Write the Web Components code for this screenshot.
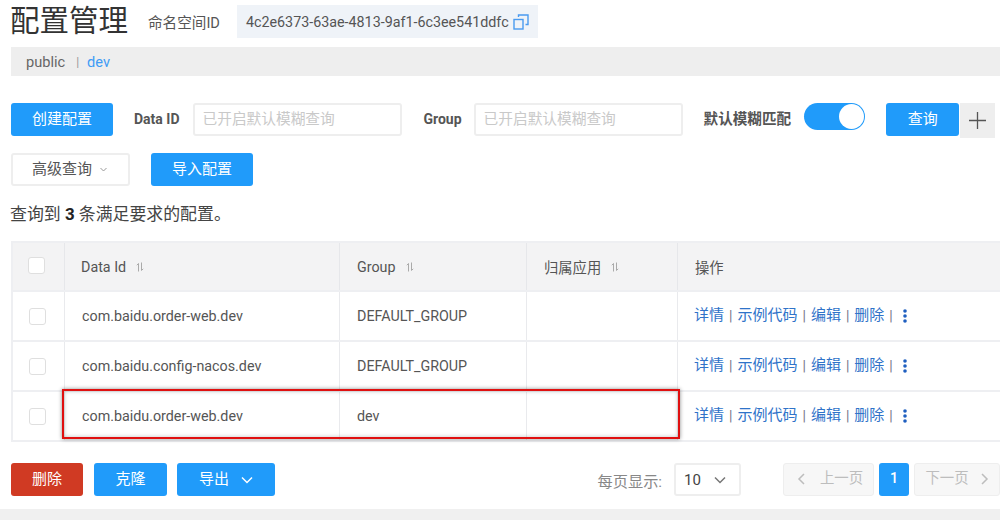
<!DOCTYPE html>
<html lang="zh">
<head>
<meta charset="utf-8">
<title>配置管理</title>
<style>
  html, body { margin: 0; height: 520px; overflow: hidden; background: #fff; }
  body { font-family: Roboto, "Noto Sans CJK SC", sans-serif; color: #333; }
</style>
</head>
<body>
<config-page></config-page>

<script>
const ICON_DOWN = '<svg width="12" height="8" viewBox="0 0 12 8"><path d="M1 1.5 6 6.5 11 1.5" fill="none" stroke="currentColor" stroke-width="1.5"/></svg>';

class UiButton extends HTMLElement {
  constructor() {
    super();
    this.attachShadow({ mode: 'open' });
  }

  connectedCallback() {
    this.shadowRoot.innerHTML = `
      <style>
        :host {
          display: inline-flex;
          align-items: center;
          justify-content: center;
          gap: 12px;
          box-sizing: border-box;
          height: 33px;
          width: var(--w, 102px);
          border-radius: 3px;
          background: #209bfa;
          color: #fff;
          font-size: 15px;
          line-height: 1;
        }
        :host([kind="danger"]) { background: #d03a23; }
        :host([kind="plain"]) {
          background: #fff;
          border: 2px solid #eeeeee;
          color: #555;
        }
      </style>
      <slot></slot>
    `;
  }
}

class UiInput extends HTMLElement {
  constructor() {
    super();
    this.attachShadow({ mode: 'open' });
  }

  connectedCallback() {
    this.shadowRoot.innerHTML = `
      <style>
        :host {
          display: flex;
          align-items: center;
          box-sizing: border-box;
          width: 209px;
          height: 33px;
          padding-left: 8px;
          border: 2px solid #eeeeee;
          border-radius: 3px;
          color: #c9c9c9;
          font-size: 14.7px;
          line-height: 1;
        }
      </style>
      <slot></slot>
    `;
  }
}

class UiSwitch extends HTMLElement {
  constructor() {
    super();
    this.attachShadow({ mode: 'open' });
  }

  connectedCallback() {
    this.shadowRoot.innerHTML = `
      <style>
        :host {
          display: flex;
          justify-content: flex-end;
          box-sizing: border-box;
          width: 61px;
          height: 27px;
          padding: 1px;
          border-radius: 14px;
          background: #209bfa;
        }
        .knob { width: 25px; height: 25px; border-radius: 50%; background: #fff; }
      </style>
      <div class="knob"></div>
    `;
  }
}

class NamespaceHeader extends HTMLElement {
  constructor() {
    super();
    this.attachShadow({ mode: 'open' });
  }

  connectedCallback() {
    this.shadowRoot.innerHTML = `
      <style>
        :host {
          display: flex;
          align-items: center;
          height: 33px;
          padding: 5px 0 0 10px;
        }
        h1 { margin: 0 20px 0 0; font-size: 29.5px; font-weight: 400; color: #333; line-height: 33px; }
        .label { font-size: 14.6px; color: #555; margin-right: 17px; }
        .id {
          display: flex;
          align-items: center;
          gap: 4px;
          box-sizing: border-box;
          width: 301px;
          height: 33px;
          padding-left: 9px;
          background: #eff3f8;
          color: #555;
          font-size: 14.3px;
        }
      </style>
      <h1>配置管理</h1>
      <span class="label">命名空间ID</span>
      <div class="id">
        <span>4c2e6373-63ae-4813-9af1-6c3ee541ddfc</span>
        <svg width="16" height="16" viewBox="0 0 16 16" fill="none" stroke="#4a9bf0" stroke-width="1.4">
          <rect x="1" y="5.5" width="9" height="9.5"/>
          <path d="M5.5 3V1H15V10.5H12.5"/>
        </svg>
      </div>
    `;
  }
}

class NamespaceTabs extends HTMLElement {
  constructor() {
    super();
    this.attachShadow({ mode: 'open' });
  }

  connectedCallback() {
    this.shadowRoot.innerHTML = `
      <style>
        :host {
          display: flex;
          align-items: center;
          height: 29px;
          margin: 9px 0 0 11px;
          padding-left: 15px;
          background: #eeeeee;
          font-size: 14.6px;
          color: #666;
        }
        .sep { margin: 0 8px 0 11px; color: #999; font-size: 12px; }
        .on { color: #3f9cf5; }
      </style>
      <span>public</span><span class="sep">|</span><span class="on">dev</span>
    `;
  }
}

class SearchBar extends HTMLElement {
  constructor() {
    super();
    this.attachShadow({ mode: 'open' });
  }

  connectedCallback() {
    this.shadowRoot.innerHTML = `
      <style>
        :host { display: block; padding: 27px 0 0 11px; }
        .row { display: flex; align-items: flex-start; }
        .second { margin-top: 15px; }
        .name { font-size: 14px; font-weight: 700; color: #555; line-height: 33px; white-space: nowrap; }
        .fuzzy { font-size: 14.6px; }
        .plus {
          display: flex;
          align-items: center;
          justify-content: center;
          width: 35px;
          height: 35px;
          margin-left: 1px;
          background: #eeeeee;
        }
        .caret { color: #999; display: flex; }
      </style>
      <div class="row">
        <ui-button>创建配置</ui-button>
        <span class="name" style="margin:0 13px 0 21px">Data ID</span>
        <ui-input>已开启默认模糊查询</ui-input>
        <span class="name" style="margin:0 12px 0 22px">Group</span>
        <ui-input>已开启默认模糊查询</ui-input>
        <span class="name fuzzy" style="margin:0 13px 0 21px">默认模糊匹配</span>
        <ui-switch></ui-switch>
        <ui-button style="--w:73px;margin-left:21px">查询</ui-button>
        <div class="plus">
          <svg width="17" height="17" viewBox="0 0 17 17"><path d="M0 8.5H17M8.5 0V17" stroke="#555" stroke-width="1.3"/></svg>
        </div>
      </div>
      <div class="row second">
        <ui-button kind="plain" style="--w:119px;gap:8px;padding-right:2px">高级查询<span class="caret"><svg width="7" height="5" viewBox="0 0 7 5"><path d="M.5 1 3.5 4 6.5 1" fill="none" stroke="currentColor"/></svg></span></ui-button>
        <ui-button style="margin-left:21px">导入配置</ui-button>
      </div>
    `;
  }
}

class SortHead extends HTMLElement {
  constructor() {
    super();
    this.attachShadow({ mode: 'open' });
  }

  connectedCallback() {
    this.shadowRoot.innerHTML = `
      <style>
        :host { display: inline-flex; align-items: center; gap: 10px; }
      </style>
      <slot></slot>
      <svg width="8" height="10" viewBox="0 0 8 10" fill="none" stroke="#aaa" stroke-width="1">
        <path d="M2.5 9.5V1.5L.8 3.2M5.5 .5V8.5L7.2 6.8"/>
      </svg>
    `;
  }
}

class ConfigRow extends HTMLElement {
  constructor() {
    super();
    this.attachShadow({ mode: 'open' });
  }

  connectedCallback() {
    const dataId = this.getAttribute('data-id');
    const group = this.getAttribute('data-group');

    this.shadowRoot.innerHTML = `
      <style>
        :host {
          display: grid;
          grid-template-columns: 52px 275px 187px 151px 1fr;
          height: 50px;
          box-sizing: border-box;
          border-left: 2px solid #eeeff2;
          border-bottom: 2px solid #eeeff2;
          font-size: 14.3px;
          color: #555;
        }
        .cell { display: flex; align-items: center; padding-left: 17px; border-right: 1px solid #e9eaed; }
        .cell:first-child { padding: 0 0 2px 15px; }
        .cell:nth-child(2) { padding-left: 16px; }
        .cell:last-child { border-right: 0; }
        .check { width: 15px; height: 15px; border: 1.5px solid #dfdfdf; border-radius: 3px; }
        .ops { color: #2f73c9; font-size: 15px; gap: 5px; padding: 0 0 1px 16px; line-height: 1; }
        .ops i { font-style: normal; color: #778; font-size: 14px; }
        .more { margin-left: 5px; display: flex; }
      </style>
      <div class="cell"><div class="check"></div></div>
      <div class="cell">${dataId}</div>
      <div class="cell">${group}</div>
      <div class="cell"></div>
      <div class="cell ops">
        <span>详情</span><i>|</i><span>示例代码</span><i>|</i><span>编辑</span><i>|</i><span>删除</span><i>|</i>
        <span class="more"><svg width="4" height="14" viewBox="0 0 4 14" fill="#1f5fc0"><circle cx="2" cy="2" r="1.8"/><circle cx="2" cy="7" r="1.8"/><circle cx="2" cy="12" r="1.8"/></svg></span>
      </div>
    `;
  }
}

class ConfigTable extends HTMLElement {
  constructor() {
    super();
    this.attachShadow({ mode: 'open' });
  }

  connectedCallback() {
    this.shadowRoot.innerHTML = `
      <style>
        :host {
          display: block;
          position: relative;
          margin-left: 11px;
          border-top: 2px solid #eeeff2;
        }
        .head {
          display: grid;
          grid-template-columns: 52px 275px 187px 151px 1fr;
          height: 49px;
          background: #f3f3f4;
          border-left: 2px solid #eeeff2;
          border-bottom: 2px solid #eeeff2;
          box-sizing: border-box;
          font-size: 14.3px;
          color: #555;
        }
        .head > div { display: flex; align-items: center; padding-left: 17px; border-right: 1px solid #e6e7ea; }
        .head > div:first-child { padding: 0 0 3px 15px; }
        .head > div:nth-child(2) { padding-left: 16px; }
        .head > div:last-child { border-right: 0; }
        .check { width: 15px; height: 15px; background: #fff; border: 1.5px solid #dfdfdf; border-radius: 3px; }
        .mark {
          position: absolute;
          left: 51px;
          top: 146px;
          width: 618px;
          height: 50px;
          box-sizing: border-box;
          border: 2px solid #e01010;
          box-shadow: 0 0 4px rgba(0, 0, 0, .45), inset 0 0 4px rgba(0, 0, 0, .25);
        }
      </style>
      <div class="head">
        <div><div class="check"></div></div>
        <div><sort-head>Data Id</sort-head></div>
        <div><sort-head>Group</sort-head></div>
        <div><sort-head>归属应用</sort-head></div>
        <div>操作</div>
      </div>
      <slot></slot>
      <div class="mark"></div>
    `;
  }
}

class PageFooter extends HTMLElement {
  constructor() {
    super();
    this.attachShadow({ mode: 'open' });
  }

  connectedCallback() {
    this.shadowRoot.innerHTML = `
      <style>
        :host { display: flex; align-items: center; padding: 21px 0 0 11px; font-size: 15px; }
        .left { display: flex; gap: 11px; }
        .size { margin-left: auto; color: #888; font-size: 15.2px; }
        .select {
          display: flex;
          align-items: center;
          justify-content: space-between;
          box-sizing: border-box;
          width: 67px;
          height: 33px;
          margin-left: 12px;
          padding: 0 13px 0 8px;
          border: 2px solid #eeeeee;
          border-radius: 3px;
          color: #444;
          font-size: 15px;
        }
        .select svg { color: #777; }
        .pager { display: flex; gap: 5px; margin-left: 42px; }
        .page {
          display: flex;
          align-items: center;
          justify-content: center;
          gap: 12px;
          box-sizing: border-box;
          width: 91px;
          height: 33px;
          padding-bottom: 1px;
          background: #f7f7f7;
          border: 1px solid #eeeeee;
          border-radius: 3px;
          color: #bdbdbd;
          font-size: 14.4px;
          line-height: 1;
        }
        .page.prev { gap: 15px; padding-left: 3px; }
        .page.cur { width: 30px; background: #209bfa; border: 0; color: #fff; font-weight: 500; }
        .page.next { width: 86px; }
      </style>
      <div class="left">
        <ui-button kind="danger" style="--w:72px">删除</ui-button>
        <ui-button style="--w:73px">克隆</ui-button>
        <ui-button style="--w:98px;margin-left:-1px">导出${ICON_DOWN}</ui-button>
      </div>
      <span class="size">每页显示:</span>
      <div class="select"><span>10</span>${ICON_DOWN}</div>
      <div class="pager">
        <div class="page prev"><svg width="8" height="12" viewBox="0 0 8 12"><path d="M7 1 2 6 7 11" fill="none" stroke="currentColor" stroke-width="1.5"/></svg>上一页</div>
        <div class="page cur">1</div>
        <div class="page next">下一页<svg width="8" height="12" viewBox="0 0 8 12"><path d="M1 1 6 6 1 11" fill="none" stroke="currentColor" stroke-width="1.5"/></svg></div>
      </div>
    `;
  }
}

class ConfigPage extends HTMLElement {
  constructor() {
    super();
    this.attachShadow({ mode: 'open' });
  }

  connectedCallback() {
    this.shadowRoot.innerHTML = `
      <style>
        :host { display: flex; flex-direction: column; height: 520px; }
        .count { margin: 17px 0 16px 10px; font-size: 16.9px; color: #444; line-height: 22px; }
        .count b { color: #222; }
        .band { flex: 1; margin-top: 13px; background: #f0f0f0; }
      </style>
      <namespace-header></namespace-header>
      <namespace-tabs></namespace-tabs>
      <search-bar></search-bar>
      <div class="count">查询到 <b>3</b> 条满足要求的配置。</div>
      <config-table>
        <config-row data-id="com.baidu.order-web.dev" data-group="DEFAULT_GROUP"></config-row>
        <config-row data-id="com.baidu.config-nacos.dev" data-group="DEFAULT_GROUP"></config-row>
        <config-row data-id="com.baidu.order-web.dev" data-group="dev"></config-row>
      </config-table>
      <page-footer></page-footer>
      <div class="band"></div>
    `;
  }
}

customElements.define('ui-button', UiButton);
customElements.define('ui-input', UiInput);
customElements.define('ui-switch', UiSwitch);
customElements.define('namespace-header', NamespaceHeader);
customElements.define('namespace-tabs', NamespaceTabs);
customElements.define('search-bar', SearchBar);
customElements.define('sort-head', SortHead);
customElements.define('config-row', ConfigRow);
customElements.define('config-table', ConfigTable);
customElements.define('page-footer', PageFooter);
customElements.define('config-page', ConfigPage);
</script>
</body>
</html>
